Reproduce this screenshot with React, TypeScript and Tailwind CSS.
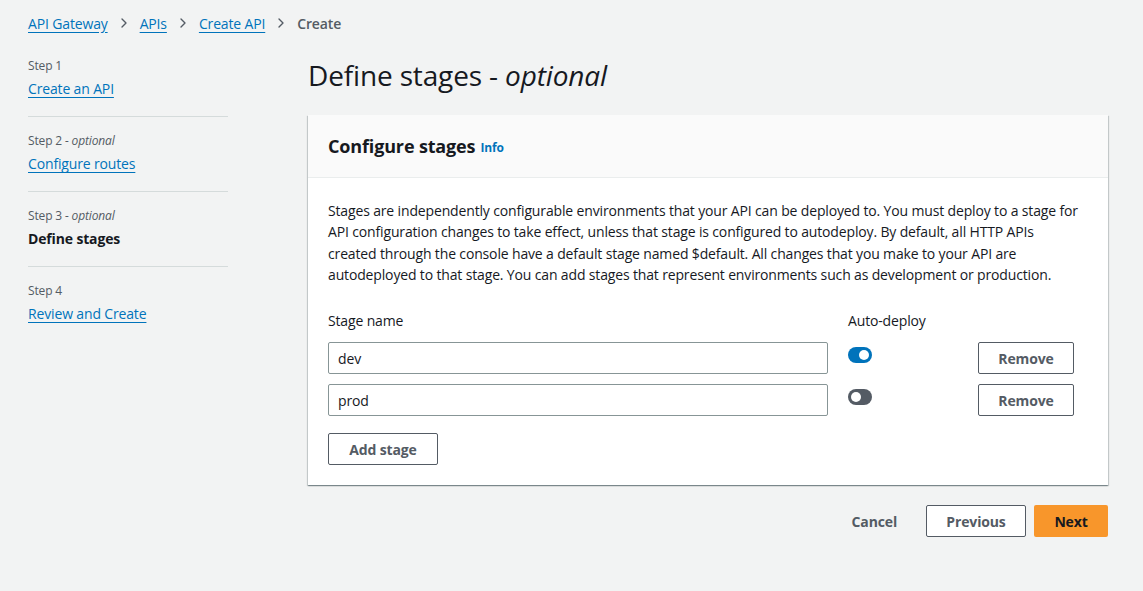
import { ChevronRight } from "lucide-react";

const font = { fontFamily: '"Open Sans", "Noto Sans", Arial, sans-serif' };

const steps = [
  { label: "Step 1", optional: false, title: "Create an API", current: false },
  { label: "Step 2", optional: true, title: "Configure routes", current: false },
  { label: "Step 3", optional: true, title: "Define stages", current: true },
  { label: "Step 4", optional: false, title: "Review and Create", current: false },
];

const stages = [
  { name: "dev", auto: true },
  { name: "prod", auto: false },
];

function Toggle({ on }: { on: boolean }) {
  return (
    <span
      className={`relative inline-block h-[16px] w-[24px] rounded-full ${
        on ? "bg-[#0073bb]" : "bg-[#545b64]"
      }`}
    >
      <span
        className={`absolute top-[3px] h-[10px] w-[10px] rounded-full bg-white ${
          on ? "left-[11px]" : "left-[3px]"
        }`}
      />
    </span>
  );
}

export default function App() {
  return (
    <div
      className="min-h-[591px] w-full bg-[#f2f3f3] tracking-[-0.15px] text-[#16191f]"
      style={font}
    >
      {/* breadcrumbs */}
      <nav className="flex h-[46px] items-center gap-[8px] pl-[28px] text-[14px]">
        <a className="text-[#0073bb] underline underline-offset-[3px]">API Gateway</a>
        <ChevronRight size={16} strokeWidth={2} className="text-[#545b64]" />
        <a className="text-[#0073bb] underline underline-offset-[3px]">APIs</a>
        <ChevronRight size={16} strokeWidth={2} className="text-[#545b64]" />
        <a className="text-[#0073bb] underline underline-offset-[3px]">Create API</a>
        <ChevronRight size={16} strokeWidth={2} className="text-[#545b64]" />
        <span className="font-semibold text-[#545b64]">Create</span>
      </nav>

      <div className="flex">
        {/* wizard steps */}
        <ol className="ml-[28px] mt-[11px] w-[200px] shrink-0">
          {steps.map((s, i) => (
            <li
              key={s.label}
              className={`pb-[17px] ${i < steps.length - 1 ? "mb-[15px] border-b border-[#d5dbdb]" : ""}`}
            >
              <div className="text-[12px] leading-[18px] text-[#545b64]">
                {s.label}
                {s.optional && (
                  <span className="italic"> - optional</span>
                )}
              </div>
              <div className="mt-[4px] text-[14px] leading-[20px]">
                {s.current ? (
                  <span className="font-bold text-[#16191f]">{s.title}</span>
                ) : (
                  <a className="text-[#0073bb] underline underline-offset-[3px]">
                    {s.title}
                  </a>
                )}
              </div>
            </li>
          ))}
        </ol>

        {/* main content */}
        <main className="ml-[80px] w-[800px]">
          <h1 className="mt-[9px] text-[28px] leading-[40px] text-[#16191f]">
            Define stages - <span className="italic">optional</span>
          </h1>

          <section className="mt-[20px] bg-white shadow-[0_1px_1px_0_rgba(0,28,36,0.3),1px_1px_1px_0_rgba(0,28,36,0.15),-1px_1px_1px_0_rgba(0,28,36,0.15)]">
            <header className="flex h-[63px] items-center border-b border-[#eaeded] bg-[#fafafa] px-[20px]">
              <h2 className="text-[18px] font-bold">Configure stages</h2>
              <a className="ml-[5px] mt-[3px] text-[12px] font-bold text-[#0073bb]">Info</a>
            </header>

            <div className="px-[20px] pb-[20px] pt-[22px]">
              <p className="w-[753px] text-[14px] leading-[21.3px] text-[#16191f]">
                Stages are independently configurable environments that your API can be deployed to. You must deploy to a stage for API configuration changes to take effect, unless that stage is configured to autodeploy. By default, all HTTP APIs created through the console have a default stage named $default. All changes that you make to your API are autodeployed to that stage. You can add stages that represent environments such as development or production.
              </p>

              <div className="mt-[26px] flex text-[14px] leading-[20px]">
                <div className="w-[520px]">Stage name</div>
                <div>Auto-deploy</div>
              </div>

              <div className="mt-[11px] flex flex-col gap-[10px]">
                {stages.map((st) => (
                  <div key={st.name} className="flex items-start">
                    <div className="flex h-[32px] w-[500px] items-center rounded-[2px] border border-[#879596] px-[9px] text-[14px]">
                      {st.name}
                    </div>
                    <div className="ml-[20px] w-[130px] pt-[3px]">
                      <Toggle on={st.auto} />
                    </div>
                    <button className="h-[32px] w-[96px] rounded-[2px] border border-[#545b64] bg-white text-[14px] font-bold text-[#545b64]">
                      Remove
                    </button>
                  </div>
                ))}
              </div>

              <button className="mt-[17px] h-[32px] w-[110px] rounded-[2px] border border-[#545b64] bg-white text-[14px] font-bold text-[#545b64]">
                Add stage
              </button>
            </div>
          </section>

          <div className="mt-[20px] flex items-center justify-end">
            <button className="mr-[29px] text-[14px] font-bold text-[#545b64]">Cancel</button>
            <button className="h-[32px] w-[100px] rounded-[2px] border border-[#545b64] bg-white text-[14px] font-bold text-[#545b64]">
              Previous
            </button>
            <button className="ml-[8px] h-[32px] w-[74px] rounded-[2px] bg-[#f8962b] text-[14px] font-bold text-[#16191f]">
              Next
            </button>
          </div>
        </main>
      </div>
    </div>
  );
}
